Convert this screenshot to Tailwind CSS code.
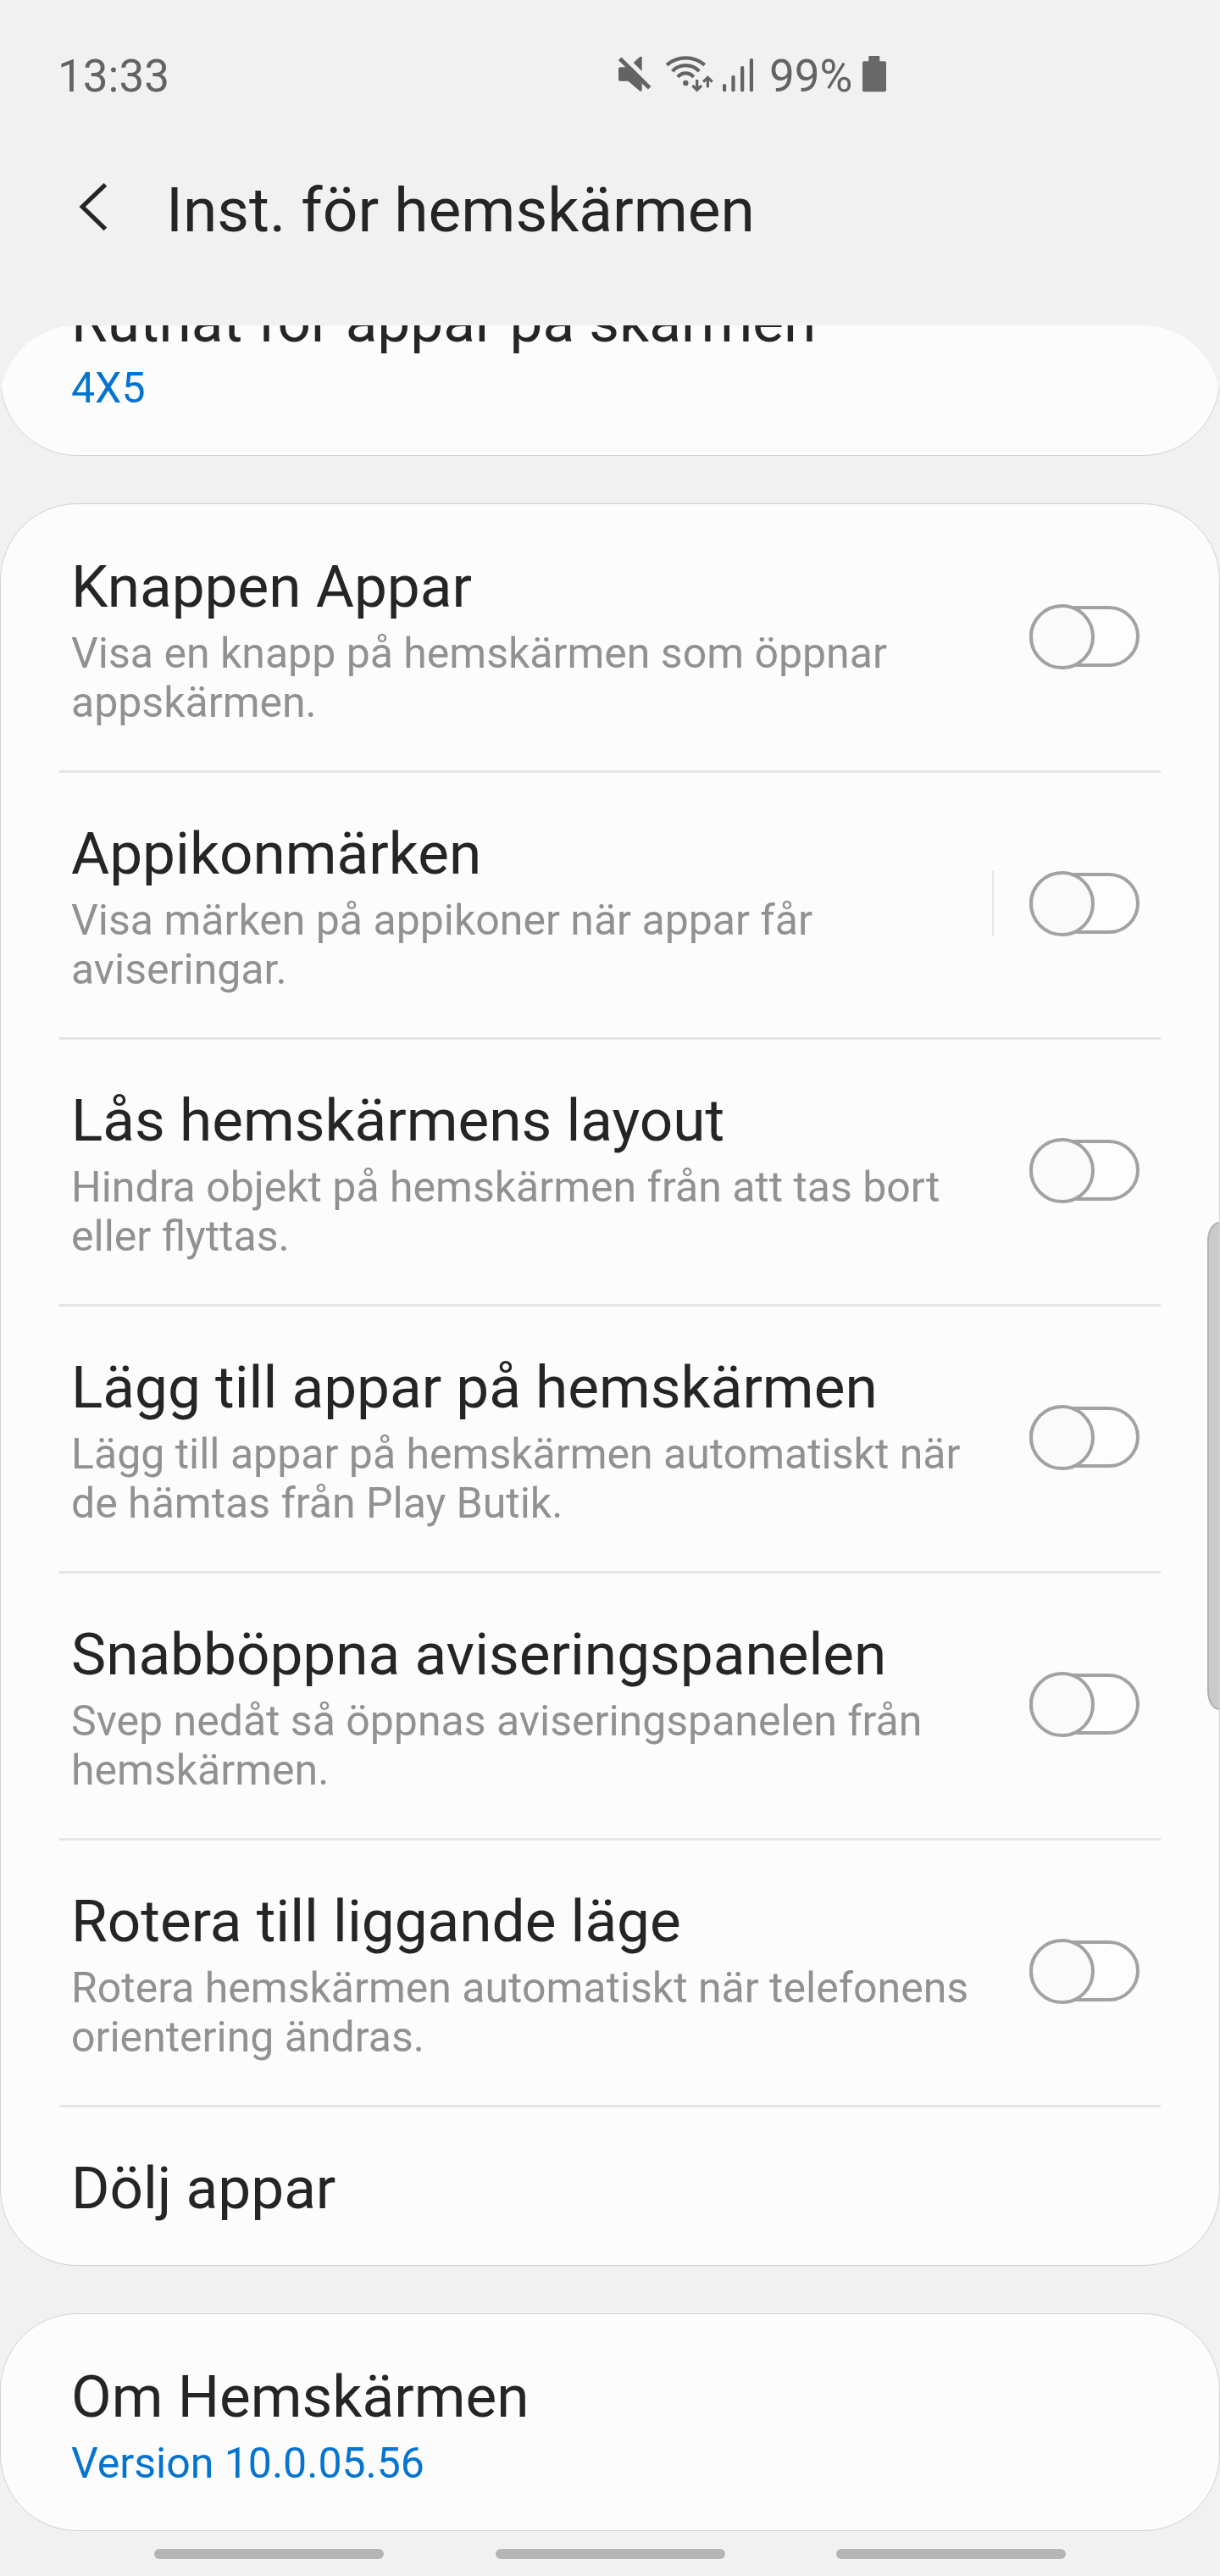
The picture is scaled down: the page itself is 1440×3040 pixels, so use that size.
<!DOCTYPE html>
<html lang="sv">
<head>
  <meta charset="UTF-8">
  <title>Inst. för hemskärmen</title>
  <meta name="viewport" content="width=device-width, initial-scale=1.0">
  <script src="https://cdn.jsdelivr.net/npm/@tailwindcss/browser@4"></script>
</head>
<body class="bg-[#f1f1f1] text-[#252525] font-['Roboto',sans-serif]">

  <!-- Reglage i avstängt läge -->
  <svg class="hidden">
    <symbol id="reglage" viewBox="0 0 130 77">
      <rect x="2" y="4" width="126" height="68" rx="34" fill="#fdfdfd" stroke="#a2a2a2" stroke-width="4"/>
      <circle cx="38.500" cy="38.500" r="36.500" fill="#fafafa" stroke="#a2a2a2" stroke-width="4"/>
    </symbol>
  </svg>

  <div class="relative w-[1440px] h-[3040px] overflow-hidden flex flex-col">

    <!-- Statusfält -->
    <div class="h-[180px] shrink-0 flex items-center pl-[68px] text-[53px] leading-[62px] text-[#636363]">
      <span class="w-[658px]">13:33</span>
      <svg class="w-[166px] h-[60px] shrink-0" viewBox="726 60 166 60" fill="none" stroke="#636363">
        <!-- ljud av -->
        <g fill="#636363" stroke="none">
          <path d="M732 79.300h7l18.700 19V106q0 2.500-2.500 1.500L741.500 95.700H732a2 2 0 0 1-2-2V81.300a2 2 0 0 1 2-2z"/>
          <path d="M747.700 74l7.300-6.800q2.700-1.200 2.700 1V84z"/>
        </g>
        <path d="M731.700 69.200l35 34.600" stroke-width="5"/>
        <!-- wifi -->
        <g stroke-width="4.200">
          <path d="M787 76.700a34.400 34.400 0 0 1 44.700 0"/>
          <path d="M793.500 84a21.800 21.800 0 0 1 31.800 0"/>
          <path d="M800 90.800a12.200 12.200 0 0 1 18.700 0"/>
        </g>
        <circle cx="809.300" cy="98" r="3.200" fill="#636363" stroke="none"/>
        <g stroke-width="3.200">
          <path d="M822.700 94v12M817.400 101l5.300 5.200 5.300-5.200"/>
          <path d="M835.400 103.300V91M830.100 96.600l5.300-5.200 5.300 5.200"/>
        </g>
        <!-- signal -->
        <g fill="#636363" stroke="none">
          <rect x="853" y="99" width="4.200" height="9.300" rx="1.800"/>
          <rect x="863.400" y="89" width="4.200" height="19.300" rx="1.800"/>
          <rect x="874" y="78" width="4.300" height="30.300" rx="1.800"/>
          <rect x="884.800" y="69" width="4.200" height="39.300" rx="1.800"/>
        </g>
      </svg>
      <span class="ml-4 w-[106px]">99%</span>
      <svg class="w-[36px] h-[60px] shrink-0" viewBox="1014 60 36 60" fill="#686868">
        <path d="M1026.300 66h11a1 1 0 0 1 1 1v5.300h6a1.700 1.700 0 0 1 1.700 1.700v32.600a1.700 1.700 0 0 1-1.700 1.700h-24.600a1.700 1.700 0 0 1-1.700-1.700V74a1.700 1.700 0 0 1 1.700-1.700h5.600V67a1 1 0 0 1 1-1z"/>
      </svg>
    </div>

    <!-- Rubrik -->
    <header class="h-[136px] mb-[68px] shrink-0 flex items-center pl-[90px]">
      <svg class="w-[40px] h-[72px] shrink-0" viewBox="90 212 40 72" fill="none" stroke="#252525" stroke-width="5.200">
        <path d="M124.400 217.800L97.200 244l27.200 26.400"/>
      </svg>
      <h1 class="ml-[66px] text-[73.1px] leading-[86px]">Inst. för hemskärmen</h1>
    </header>

    <!-- Rullande lista, första kortet är delvis bortrullat -->
    <main class="h-[2604px] shrink-0 overflow-hidden rounded-t-[91px]">
      <div class="-mt-[103px] flex flex-col gap-14">

        <section class="h-[257px] px-[83px] pt-[57px] bg-[#fcfcfc] border border-[#d2d2d2] rounded-[91px]">
          <h2 class="text-[69.3px] leading-[82px]">Rutnät för appar på skärmen</h2>
          <p class="mt-2 text-[50px] leading-[58px] text-[#0574d0]">4X5</p>
        </section>

        <section class="h-[2080px] px-[69px] pt-[2px] bg-[#fcfcfc] border border-[#d2d2d2] rounded-[91px]">
          <div class="h-[315px] flex items-center justify-between pl-[14px] pr-[25px] pb-[3px] border-b-3 border-[#e5e5e5]">
            <div class="self-start pt-[55px] whitespace-nowrap">
              <h2 class="text-[69.3px] leading-[82px]">Knappen Appar</h2>
              <p class="mt-2 text-[50px] leading-[58px] text-[#919191]">Visa en knapp på hemskärmen som öppnar<br>appskärmen.</p>
            </div>
            <svg class="w-[130px] h-[77px] shrink-0"><use href="#reglage"/></svg>
          </div>

          <div class="h-[315px] flex items-center justify-between pl-[14px] pr-[25px] pb-[3px] border-b-3 border-[#e5e5e5]">
            <div class="self-start pt-[55px] whitespace-nowrap">
              <h2 class="text-[69.3px] leading-[82px]">Appikonmärken</h2>
              <p class="mt-2 text-[50px] leading-[58px] text-[#919191]">Visa märken på appikoner när appar får<br>aviseringar.</p>
            </div>
            <div class="flex items-center gap-[42px]">
              <div class="w-[2px] h-[77px] bg-[#e5e5e5]"></div>
              <svg class="w-[130px] h-[77px] shrink-0"><use href="#reglage"/></svg>
            </div>
          </div>

          <div class="h-[315px] flex items-center justify-between pl-[14px] pr-[25px] pb-[3px] border-b-3 border-[#e5e5e5]">
            <div class="self-start pt-[55px] whitespace-nowrap">
              <h2 class="text-[69.3px] leading-[82px]">Lås hemskärmens layout</h2>
              <p class="mt-2 text-[50px] leading-[58px] text-[#919191]">Hindra objekt på hemskärmen från att tas bort<br>eller flyttas.</p>
            </div>
            <svg class="w-[130px] h-[77px] shrink-0"><use href="#reglage"/></svg>
          </div>

          <div class="h-[315px] flex items-center justify-between pl-[14px] pr-[25px] pb-[3px] border-b-3 border-[#e5e5e5]">
            <div class="self-start pt-[55px] whitespace-nowrap">
              <h2 class="text-[69.3px] leading-[82px]">Lägg till appar på hemskärmen</h2>
              <p class="mt-2 text-[50px] leading-[58px] text-[#919191]">Lägg till appar på hemskärmen automatiskt när<br>de hämtas från Play Butik.</p>
            </div>
            <svg class="w-[130px] h-[77px] shrink-0"><use href="#reglage"/></svg>
          </div>

          <div class="h-[315px] flex items-center justify-between pl-[14px] pr-[25px] pb-[3px] border-b-3 border-[#e5e5e5]">
            <div class="self-start pt-[55px] whitespace-nowrap">
              <h2 class="text-[69.3px] leading-[82px]">Snabböppna aviseringspanelen</h2>
              <p class="mt-2 text-[50px] leading-[58px] text-[#919191]">Svep nedåt så öppnas aviseringspanelen från<br>hemskärmen.</p>
            </div>
            <svg class="w-[130px] h-[77px] shrink-0"><use href="#reglage"/></svg>
          </div>

          <div class="h-[315px] flex items-center justify-between pl-[14px] pr-[25px] pb-[3px] border-b-3 border-[#e5e5e5]">
            <div class="self-start pt-[55px] whitespace-nowrap">
              <h2 class="text-[69.3px] leading-[82px]">Rotera till liggande läge</h2>
              <p class="mt-2 text-[50px] leading-[58px] text-[#919191]">Rotera hemskärmen automatiskt när telefonens<br>orientering ändras.</p>
            </div>
            <svg class="w-[130px] h-[77px] shrink-0"><use href="#reglage"/></svg>
          </div>

          <div class="pl-[14px] pt-[55px]">
            <h2 class="text-[69.3px] leading-[82px]">Dölj appar</h2>
          </div>
        </section>

        <section class="h-[257px] px-[83px] pt-[57px] bg-[#fcfcfc] border border-[#d2d2d2] rounded-[91px]">
          <h2 class="text-[69.3px] leading-[82px]">Om Hemskärmen</h2>
          <p class="mt-2 text-[50px] leading-[58px] text-[#0574d0]">Version 10.0.05.56</p>
        </section>
      </div>
    </main>

    <!-- Navigeringsgester -->
    <nav class="grow flex justify-center gap-[131.5px] pt-[20px]">
      <div class="w-[271px] h-[12px] rounded-full bg-[#b5b5b5] ring-1 ring-white/30"></div>
      <div class="w-[271px] h-[12px] rounded-full bg-[#b5b5b5] ring-1 ring-white/30"></div>
      <div class="w-[271px] h-[12px] rounded-full bg-[#b5b5b5] ring-1 ring-white/30"></div>
    </nav>

    <!-- Kantpanelens handtag -->
    <div class="absolute right-px top-[1442px] w-[14px] h-[576px] rounded-l-[14px_22px] bg-[#cdc9c6] border-2 border-r-0 border-[#b3b2b1]"></div>
  </div>
</body>
</html>
